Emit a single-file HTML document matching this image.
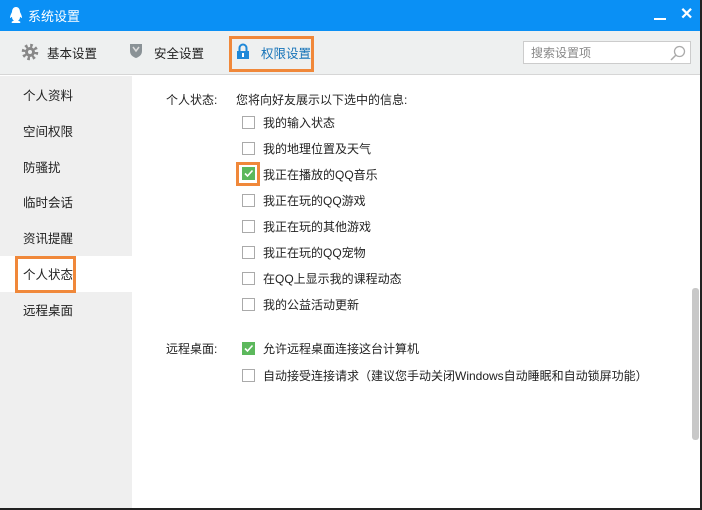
<!DOCTYPE html><html><head><meta charset="utf-8"><style>
*{margin:0;padding:0;box-sizing:border-box}
body{width:702px;height:510px;overflow:hidden;font-family:"Liberation Sans","Noto Sans CJK SC",sans-serif;font-size:12px;color:#222;background:#fff;position:relative}
.title{position:absolute;left:0;top:0;width:702px;height:31px;background:#0a90f5;color:#fff;font-size:13px}
.tb{position:absolute;left:0;top:31px;width:702px;height:44px;background:#eef0f0;border-bottom:1px solid #d6d6d6}
.side{position:absolute;left:0;top:76px;width:132px;height:434px;background:#efefef}
.si{position:absolute;left:23px;font-size:12.5px;color:#222}
.t{position:absolute;font-size:12px;white-space:nowrap}
.cb{position:absolute;left:242px;width:13px;height:13px;border:1px solid #aaa;background:#fff}
.ck{background:#5cb85c;border-color:#5cb85c}
.o{position:absolute;border:3px solid #f0883a}
</style></head><body>
<div class="title">
<svg style="position:absolute;left:9px;top:6px" width="14" height="18" viewBox="0 0 14 18"><path d="M7 1C4 1 3 4 3 6 2 8 1 10 1 12c1 0 1-1 2-1 0 2 1 3 2 4-2 0-3 1-2 2h8c1-1 0-2-2-2 1-1 2-2 2-4 1 0 1 1 2 1 0-2-1-4-2-6 0-2-1-5-4-5z" fill="#fff"/></svg>
<span style="position:absolute;left:28px;top:6px">系统设置</span>
<div style="position:absolute;left:654px;top:18px;width:12px;height:2px;background:#fff"></div>
<span style="position:absolute;left:680px;top:4px;font-size:16px;font-weight:bold">✕</span>
</div>
<div class="tb">
<svg style="position:absolute;left:21px;top:12px" width="18" height="18" viewBox="0 0 18 18"><circle cx="9" cy="9" r="6.5" fill="none" stroke="#888" stroke-width="3.5" stroke-dasharray="2.5 2.6"/><circle cx="9" cy="9" r="5" fill="#888"/><circle cx="9" cy="9" r="2" fill="#eef0f0"/></svg>
<span class="t" style="left:47px;top:12px;font-size:12.5px">基本设置</span>
<svg style="position:absolute;left:129px;top:12px" width="14" height="16" viewBox="0 0 14 16"><path d="M1 1h12v7c0 4-3 6-6 7-3-1-6-3-6-7z" fill="#8a9296"/><path d="M4 4l3 4 3-4" fill="none" stroke="#ddd" stroke-width="1.5"/></svg>
<span class="t" style="left:154px;top:12px;font-size:12.5px">安全设置</span>
<div class="o" style="left:229px;top:5px;width:85px;height:36px"></div>
<svg style="position:absolute;left:236px;top:12px" width="14" height="17" viewBox="0 0 14 17"><path d="M3.5 8V5a3.5 3.5 0 017 0v3" fill="none" stroke="#1e88d8" stroke-width="2"/><rect x="1" y="8" width="12" height="8" fill="#1e88d8"/><rect x="6" y="10" width="2" height="4" fill="#fff"/></svg>
<span class="t" style="left:261px;top:12px;font-size:12.5px;color:#1673b8">权限设置</span>
<div style="position:absolute;left:523px;top:10px;width:168px;height:23px;background:#fff;border:1px solid #ccc"><span class="t" style="left:7px;top:2px;color:#888">搜索设置项</span>
<svg style="position:absolute;left:146px;top:3px" width="16" height="16" viewBox="0 0 16 16"><circle cx="9.5" cy="6.5" r="5" fill="none" stroke="#aaa" stroke-width="1.3"/><path d="M6 10l-5 5" stroke="#aaa" stroke-width="1.5"/></svg></div>
</div>
<div class="side">
<div style="position:absolute;left:0;top:180px;width:132px;height:36px;background:#fff"></div>
<div class="si" style="top:9px">个人资料</div>
<div class="si" style="top:45px">空间权限</div>
<div class="si" style="top:81px">防骚扰</div>
<div class="si" style="top:116px">临时会话</div>
<div class="si" style="top:152px">资讯提醒</div>
<div class="o" style="left:15px;top:180px;width:61px;height:37px"></div>
<div class="si" style="top:188px">个人状态</div>
<div class="si" style="top:224px">远程桌面</div>
</div>
<span class="t" style="left:166px;top:91px">个人状态:</span>
<span class="t" style="left:236px;top:91px">您将向好友展示以下选中的信息:</span>
<div class="cb" style="top:116px"></div><span class="t" style="left:263px;top:114px">我的输入状态</span>
<div class="cb" style="top:142px"></div><span class="t" style="left:263px;top:140px">我的地理位置及天气</span>
<div class="o" style="left:236px;top:162px;width:24px;height:24px"></div>
<div class="cb ck" style="top:167px"><svg width="11" height="11" viewBox="0 0 11 11" style="position:absolute;left:0;top:0"><path d="M2 5.5l2.5 2.5 5-5.5" fill="none" stroke="#fff" stroke-width="1.6"/></svg></div><span class="t" style="left:263px;top:166px">我正在播放的QQ音乐</span>
<div class="cb" style="top:194px"></div><span class="t" style="left:263px;top:192px">我正在玩的QQ游戏</span>
<div class="cb" style="top:220px"></div><span class="t" style="left:263px;top:218px">我正在玩的其他游戏</span>
<div class="cb" style="top:246px"></div><span class="t" style="left:263px;top:244px">我正在玩的QQ宠物</span>
<div class="cb" style="top:272px"></div><span class="t" style="left:263px;top:270px">在QQ上显示我的课程动态</span>
<div class="cb" style="top:298px"></div><span class="t" style="left:263px;top:296px">我的公益活动更新</span>
<span class="t" style="left:166px;top:340px">远程桌面:</span>
<div class="cb ck" style="top:342px"><svg width="11" height="11" viewBox="0 0 11 11" style="position:absolute;left:0;top:0"><path d="M2 5.5l2.5 2.5 5-5.5" fill="none" stroke="#fff" stroke-width="1.6"/></svg></div><span class="t" style="left:263px;top:340px">允许远程桌面连接这台计算机</span>
<div class="cb" style="top:369px"></div><span class="t" style="left:263px;top:367px">自动接受连接请求（建议您手动关闭Windows自动睡眠和自动锁屏功能）</span>
<div style="position:absolute;left:692px;top:288px;width:7px;height:152px;background:#c8c8c8;border-radius:3px"></div>
<div style="position:absolute;left:700px;top:0;width:2px;height:510px;background:#222"></div>
<div style="position:absolute;left:0;top:508px;width:702px;height:2px;background:#222"></div>
</body></html>
